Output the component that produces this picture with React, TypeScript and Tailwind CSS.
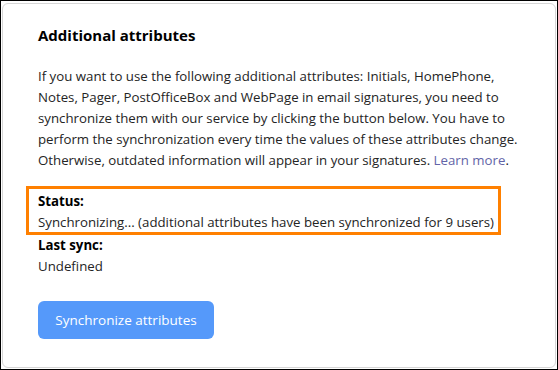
import React from "react";

export default function App() {
  return (
    <div className="w-[558px] h-[370px] border border-black bg-white p-[1px]" style={{ fontFamily: '"Open Sans", "Noto Sans", sans-serif' }}>
      <div className="h-[365px] mt-[1px] rounded-[6px] border border-[#d6d6d6] bg-white pl-[35px] pr-[10px] pt-[20px] text-[#242424]">
        <h2 className="text-[15px] font-bold leading-[22px] text-black">Additional attributes</h2>
        <p className="mt-[20px] text-[13.25px] leading-[21px] whitespace-nowrap">
          If you want to use the following additional attributes: Initials, HomePhone,
          <br />
          Notes, Pager, PostOfficeBox and WebPage in email signatures, you need to
          <br />
          synchronize them with our service by clicking the button below. You have to
          <br />
          perform the synchronization every time the values of these attributes change.
          <br />
          Otherwise, outdated information will appear in your signatures.{" "}
          <a className="text-[#6264a7]">Learn more</a>.
        </p>
        <div className="mt-[15px] -ml-[12px] w-[475px] border-[3px] border-[#ff8000] pl-[9px] pt-[2px] h-[49px] whitespace-nowrap">
          <div className="text-[13.25px] leading-[21px] font-bold text-black">Status:</div>
          <div className="text-[13.25px] leading-[21px]">Synchronizing... (additional attributes have been synchronized for 9 users)</div>
        </div>
        <div className="text-[13.25px] leading-[21px] font-bold text-black">Last sync:</div>
        <div className="text-[13.25px] leading-[21px]">Undefined</div>
        <button className="mt-[24px] w-[176px] h-[38px] rounded-[6px] bg-[#5599fa] text-white text-[13.5px]">Synchronize attributes</button>
      </div>
    </div>
  );
}
